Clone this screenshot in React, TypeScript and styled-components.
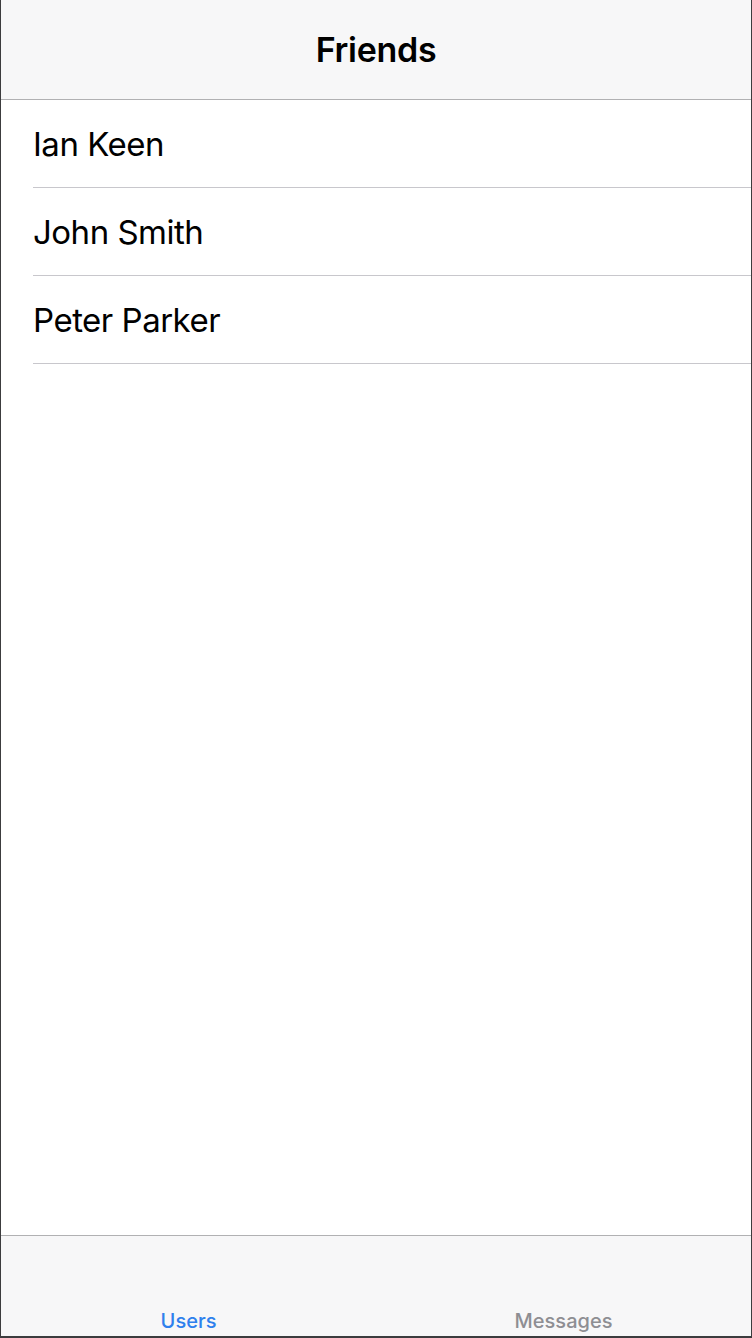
import React from "react";
import styled, { createGlobalStyle } from "styled-components";

const Global = createGlobalStyle`
  html, body { margin: 0; padding: 0; background: #ffffff; }
  body { font-family: Inter, "Liberation Sans", sans-serif; -webkit-font-smoothing: antialiased; }
  * { box-sizing: border-box; }
`;

const Frame = styled.div`
  width: 752px;
  height: 1338px;
  display: flex;
  flex-direction: column;
  border-left: 1px solid #3c3c3e;
  border-right: 1px solid #3c3c3e;
  border-bottom: 2px solid #3c3c3e;
  background: #ffffff;
`;

const NavBar = styled.header`
  height: 100px;
  flex: none;
  display: flex;
  align-items: center;
  justify-content: center;
  background: #f7f7f8;
  border-bottom: 1px solid #b1b1b3;
`;

const Title = styled.h1`
  margin: 0;
  font-size: 34px;
  font-weight: 600;
  color: #000000;
  letter-spacing: -0.3px;
`;

const List = styled.ul`
  flex: 1;
  margin: 0;
  padding: 0;
  list-style: none;
`;

const Row = styled.li`
  height: 88px;
  margin-left: 32px;
  display: flex;
  align-items: center;
  border-bottom: 1px solid #c8c7cc;
  font-size: 33px;
  font-weight: 400;
  color: #000000;
  letter-spacing: -0.5px;
`;

const TabBar = styled.nav`
  height: 101px;
  flex: none;
  display: grid;
  grid-template-columns: 1fr 1fr;
  background: #f7f7f8;
  border-top: 1px solid #b1b1b3;
`;

const Tab = styled.div<{ $active?: boolean }>`
  display: flex;
  align-items: flex-end;
  justify-content: center;
  padding-bottom: 3px;
  font-size: 20px;
  font-weight: 500;
  color: ${(p) => (p.$active ? "#2f80ed" : "#8e8e93")};
`;

const friends = ["Ian Keen", "John Smith", "Peter Parker"];

export default function App() {
  return (
    <>
      <Global />
      <Frame>
        <NavBar>
          <Title>Friends</Title>
        </NavBar>
        <List>
          {friends.map((f) => (
            <Row key={f}>{f}</Row>
          ))}
        </List>
        <TabBar>
          <Tab $active>Users</Tab>
          <Tab>Messages</Tab>
        </TabBar>
      </Frame>
    </>
  );
}
